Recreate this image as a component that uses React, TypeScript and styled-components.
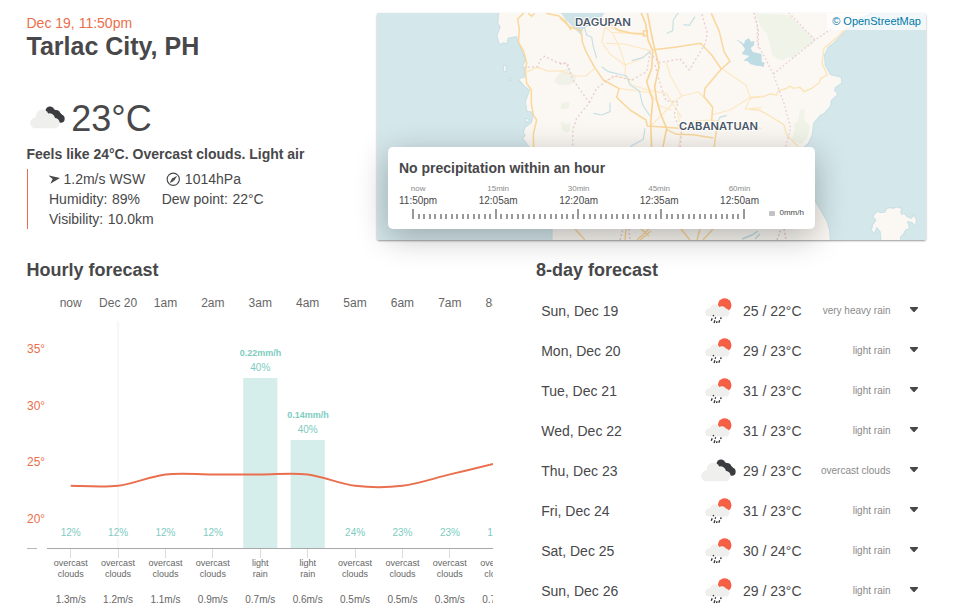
import React from "react";
import styled, { createGlobalStyle } from "styled-components";

const GlobalStyle = createGlobalStyle`
  * { box-sizing: border-box; }
  body { margin: 0; background: #fff; color: #48484a; font: 14px/20px "Liberation Sans", Arial, sans-serif; }
  svg { display: block; flex: none; }
`;

const Page = styled.main`
  width: 957px;
  height: 613px;
  overflow: hidden;
  padding: 13px 30px 0 26.5px;
`;
const TopRow = styled.section`
  display: grid;
  grid-template-columns: 350px 550px;
  height: 247px;
`;
const Timestamp = styled.div`
  color: #eb6e4b;
  height: 20px;
`;
const City = styled.h2`
  margin: 0 0 39px;
  font-size: 25px;
  line-height: 26px;
`;
const CurrentTemp = styled.div`
  display: flex;
  align-items: center;
  height: 40px;
  padding-left: 3px;
  gap: 6.5px;
  font-size: 36px;
  line-height: 40px;
`;
const CurrentDegrees = styled.span`
  padding-top: 2px;
`;
const Feels = styled.div`
  margin-top: 6px;
  font-weight: bold;
  line-height: 20px;
`;
const Facts = styled.ul`
  list-style: none;
  margin: 5px 0 0;
  padding: 0 0 0 21px;
  border-left: 1px solid #eb6e4b;
`;
const FactLine = styled.li`
  display: flex;
  gap: 21.2px;
  height: 20px;
`;
const Fact = styled.span`
  display: flex;
  align-items: center;
  gap: 4px;
  white-space: nowrap;
`;
const FactLabel = styled.span`
  padding: 0 0.6px 0 0.5px;
`;

const MapFrame = styled.div`
  position: relative;
  width: 549.5px;
  height: 227px;
  border-radius: 2px;
  box-shadow: 0 1px 2px rgba(0, 0, 0, 0.4);
`;
const Attribution = styled.a`
  position: absolute;
  top: 0;
  right: 0;
  padding: 0 5px;
  height: 17px;
  font-size: 11px;
  line-height: 16.5px;
  color: #0078a8;
  background: rgba(255, 255, 255, 0.7);
`;
const PrecipCard = styled.div`
  position: absolute;
  left: 11.5px;
  top: 134px;
  width: 427px;
  height: 82px;
  padding: 11px;
  border-radius: 5px;
  background: #fff;
  box-shadow: 0 8px 32px rgba(0, 0, 0, 0.28);
`;
const PrecipTitle = styled.div`
  font-weight: bold;
  line-height: 20px;
`;
const TimeRow = styled.div`
  display: flex;
  justify-content: space-between;
  width: 360px;
  margin-top: 5px;
`;
const TimeLabel = styled.div`
  text-align: center;
  font-size: 10px;
  line-height: 13px;
`;
const Offset = styled.div`
  color: #8a8a8a;
  font-size: 8px;
  line-height: 11px;
`;
const TickRow = styled.div`
  display: flex;
  align-items: flex-end;
  margin: 1px 0 0 13px;
`;
const Ticks = styled.div`
  display: flex;
  justify-content: space-between;
  align-items: flex-end;
  width: 333px;
  height: 10px;
`;
const Tick = styled.i<{ $major: boolean }>`
  width: 2px;
  height: ${(p) => (p.$major ? 10 : 5)}px;
  background: #999;
`;
const Legend = styled.div`
  display: flex;
  align-items: center;
  gap: 4.5px;
  margin: 0 0 1px 24px;
  font-size: 8px;
  line-height: 10px;
`;
const Swatch = styled.i`
  width: 6px;
  height: 5px;
  border-radius: 1px;
  background: #c2c2c2;
`;

const Forecasts = styled.section`
  display: grid;
  grid-template-columns: 466.5px 391px;
  gap: 43px;
`;
const Heading = styled.h3`
  margin: 0;
  font-size: 18px;
  line-height: 20px;
`;
const HourlyBody = styled.div`
  display: flex;
`;
const DegreeAxis = styled.div`
  width: 20.5px;
  height: 310px;
  padding: 59px 0 0 0.5px;
  color: #eb6e4b;
  font-size: 12px;
`;
const Degree = styled.div`
  height: 56.6px;
  line-height: 20px;
`;
const AxisStub = styled.div`
  width: 10px;
  height: 1px;
  margin-top: -17.4px;
  background: #b8b8b8;
`;
const Hours = styled.div`
  width: 446px;
  overflow: hidden;
`;
const HourRow = styled.div<{ $size: number; $height: number; $shift?: number }>`
  display: grid;
  grid-template-columns: repeat(10, 47.4px);
  height: ${(p) => p.$height}px;
  padding-top: ${(p) => p.$shift ?? 0}px;
  align-items: center;
  text-align: center;
  white-space: nowrap;
  font-size: ${(p) => p.$size}px;
  line-height: 11px;
  color: #666;
`;
const Condition = styled.div`
  white-space: pre-line;
`;

const DayList = styled.ul`
  list-style: none;
  margin: 11px 0 0;
  padding: 0 0 0 5.2px;
`;
const Day = styled.li`
  display: grid;
  grid-template-columns: 158.5px 37px 6.3px 62.5px 85px 20px 10px;
  height: 40px;
  align-items: center;
`;
const DayIcon = styled.span`
  display: flex;
  justify-content: center;
`;
const DayTemp = styled.span`
  grid-column: 4;
  white-space: nowrap;
`;
const DayText = styled.span`
  text-align: right;
  font-size: 10px;
  line-height: 18px;
  padding-bottom: 1px;
  color: #8a8a8a;
`;
const Caret = styled.svg`
  grid-column: 7;
  margin-top: -3px;
`;

const OvercastIcon = () => (
  <svg width="35.33" height="23.33" viewBox="62 58 106 70">
    <g fill="#3b3c40">
      <circle cx="122" cy="73" r="13.5" />
      <circle cx="141" cy="83" r="12" />
      <circle cx="154" cy="96" r="12" />
      <path d="M128 66L146 72L160 86L144 104L116 82Z" />
    </g>
    <g fill="#efefed">
      <circle cx="79" cy="108.500" r="16.500" />
      <circle cx="99" cy="88" r="19.500" />
      <circle cx="121" cy="96" r="16" />
      <circle cx="135" cy="109" r="16" />
      <path d="M79 90H125V125H79ZM110 100H135V125H110Z" />
    </g>
  </svg>
);

const RainIcon = () => (
  <svg width="26.67" height="26" viewBox="74 24 80 78">
    <circle cx="133" cy="45" r="20.500" fill="#f45f45" />
    <g fill="#efefed">
      <circle cx="87" cy="67" r="12.500" />
      <circle cx="104" cy="58" r="15.500" />
      <circle cx="125" cy="61" r="12.500" />
      <circle cx="135" cy="68" r="12.500" />
      <path d="M87 60H126V79.500H87ZM120 64H136V80.500H120Z" />
    </g>
    <path
      stroke="#303236"
      strokeWidth="4"
      d="M100 75L98.500 79M95.500 85L93 92M106 82L104.500 86M104 91L101 99M123 82L120.500 87M110.500 94L108.500 99M118 91L115.500 98"
    />
  </svg>
);

const WindIcon = () => (
  <svg width="11" height="9" viewBox="0 0 33 27">
    <path fill="#48484a" d="M-2 1L33 9L4 26L11 12Z" />
  </svg>
);

const GaugeIcon = () => (
  <svg width="14.500" height="14.500" viewBox="0 0 44 44">
    <circle cx="22" cy="22" r="18.500" fill="none" stroke="#48484a" strokeWidth="3.500" />
    <path fill="#48484a" d="M34 11L25 26L19 20ZM11 33L17 22L23 28Z" />
    <circle cx="21.500" cy="22.500" r="4" fill="#48484a" />
  </svg>
);

const MapDrawing = () => (
  <svg width="549.5" height="227" viewBox="377 13 549.5 227">
    <rect x="377" y="13" width="550" height="227" fill="#d4e7eb" />
    <g fill="#fbf8f3" stroke="#c6e0e5" strokeWidth="2" strokeLinejoin="round" style={{ paintOrder: "stroke" }}>
      <path d="M499.300 12L498.300 23L500.700 27L497.300 36L500 44L503.300 42.300L506.700 43.300L507.700 37.700L516.700 36L518.700 42L524 55L526 60L522.700 66.700L525.700 70L525 77.300L519 79.300L525 86L530 90L526 101.700L527.300 110.700L532.700 111.700L533.300 118L531.700 123L525 128L524 133L526 136L523 138L529 146L552.500 170L552.500 242L830 242L829 230L826.700 221.700L820 210L815 201.700L803 170L803.300 147L808 143L811.700 135L813.300 123L820 115L824 113L830 106L831 100L836.700 95L836.700 92.700L834 91L835 87.300L841.300 83L841 78L839.300 77.300L832 75.500L830 75L824.700 65L824 55L828 46.700L833 43L840 36L848 28L860 18L873 12Z" />
      <path d="M872 230L873 225L876.700 220L873.300 217L875 214L878 211.700L880 213L885 212.700L887 209L890 208L893 209L897 207.500L901.700 209L900 212L901.700 215L904 214L907 217L911 219L914 216L916 220L915 225L912 222L907 221L909 228L905 230L903 234L900 236.700L900 242L881.700 242L880.700 231.700L876.700 226.700L874 232.700Z" />
      <path d="M504 66h1.500v5h-1.500zM510 79h1v1h-1zM526 119l3 1l-3 2z" />
    </g>
    <path fill="#cde3e7" d="M560 12L605 12L600 20L592 24L583 29L581 35L575 29L567 21Z" />

    <g transform="translate(370 0) scale(.33333)" fill="none">
      <path fill="#f0f2e8" d="M553 245L560 228L576 215L590 222L600 220V255H565ZM572 318L580 308L585 312L598 305V322L580 328ZM575 367L588 373L600 370V392L590 396L578 390L585 380Z" />
      <path stroke="#fad79c" strokeWidth="4.500" d="M462 38L443 57L448 88L445 125L462 157L470 190L466 210L470 250L484 270L484 310L490 345L500 360L490 402L491 445M528 40L565 47L586 62L603 90M475 40L485 49L494 40" />
      <path stroke="#fce8c4" strokeWidth="4" d="M468 217L500 202L538 214L580 212L602 226" />
      <path stroke="#e6ccd0" strokeWidth="4" strokeDasharray="6 7" d="M460 202L504 200L510 180L524 169L560 187L590 192L602 220" />
    </g>

    <g transform="translate(560 0) scale(.33333)" fill="none" strokeLinejoin="round">
      <path fill="#f0f2e8" d="M0 222L20 205L35 218L50 230L38 252L0 248ZM4 308L26 305L22 326L2 326ZM4 366L32 380L24 398L4 390Z" />
      <path stroke="#fce8c4" strokeWidth="3.500" d="M137 75L125 125L150 162L197 197L194 225L215 255L270 272L318 280L365 352M78 72L110 60L155 97L250 103M145 80L190 98L250 100M138 130L192 132L272 152M155 95L180 145L195 195L236 180L272 155M318 185L330 225L365 288L414 276L432 292M484 205L558 256L572 295L555 328L605 322M455 345L510 330L572 292L605 288M175 265L270 278L300 318L335 330M0 213L50 228L78 228L105 204M130 245L170 228L222 242M365 288L337 310L330 320L275 375M360 382L410 362L455 360L605 385M352 338L365 388L355 445" />
      <path stroke="#fad79c" strokeWidth="4.500" d="M0 54L32 82L64 92L67 125L78 155L104 202L130 240L177 266L170 292L210 330L258 360L262 378L318 382L375 386M130 57L175 90L215 100L255 103M280 149L345 142L422 130L455 165L484 207L510 184L492 155L478 95L454 40M484 207L435 265L432 290L458 322L455 360L470 385L462 445M318 388L350 403L400 404L460 414M250 92H262V108H250Z" />
      <path stroke="#f9d498" strokeWidth="5" d="M262 38L270 80L280 130L297 200L284 260L290 300L303 345L320 385L308 445M243 38L257 70L264 120L278 152L275 205L260 245L278 300L272 370L275 445" />
      <path stroke="#e8ced3" strokeWidth="4" strokeDasharray="6 7" d="M0 192L22 188L38 238L88 308L50 355L38 390L38 442M88 308L110 265L162 227L215 240L260 215L270 160L298 188L360 177L388 210L435 132L442 100L425 40M285 195L297 240L318 303L355 306L342 345L365 400L360 442M582 38L595 90V145" />
      <path stroke="#c6e0e5" strokeWidth="3.500" d="M70 72L80 105L95 112L100 140L110 175M125 200L145 215L200 228L210 255L238 272L248 315L270 348M355 38L340 60L338 92L320 100M405 50L388 76L370 74M272 152L250 172L215 182M100 340L125 345L150 335V308M255 385L250 418L210 440M500 346L480 352L470 370" />
      <path fill="#bddce3" d="M528 118L540 124L552 132L556 120L567 115L573 125L583 123L582 136L572 144L578 156L605 162V198L590 197L572 193L562 183L550 182L568 168L545 162L555 147L545 132Z" />
    </g>

    <g transform="translate(750 0) scale(.33333)" fill="none">
      <path fill="#f0f3e8" d="M15 40L120 45L150 78L195 115L190 132L170 140L145 156L135 175L115 172L100 180L85 178L65 165L60 130L50 100L38 90L30 75ZM150 330L165 328L162 360L180 378L174 412L155 432L140 425L125 425L135 385L130 378L145 360Z" />
      <path fill="#bddce3" d="M0 148L8 155L2 165L18 172L30 184L44 188L40 202L25 195L0 190Z" />
      <path stroke="#fce4b8" strokeWidth="4" d="M0 294L40 290L60 282L80 285L85 272L110 265L120 258L130 265L150 262L162 275L185 265L208 248L212 235L232 225L216 190L222 145L270 104L295 78M0 328L28 330L60 348L102 375L110 405L145 440" />
      <path stroke="#e8ced3" strokeWidth="4" strokeDasharray="5 7" d="M12 38L22 75L22 130L70 222L102 310L122 385L106 442M116 38L195 120L245 86M195 120L70 222" />
    </g>

    <g fill="none" strokeWidth="1.500" stroke="#fad79c">
      <path d="M575 229L585 240M626 229L625 240M649 229L637 240M649 236L641 229M681 229L690 240M700 229L697 240M713 229L703 240M640 240L651 231" />
      <path stroke="#e6ccd0" strokeDasharray="2 2" d="M620 240L623 229M629 229L630 240M777 240L781 229M784 229L786 240" />
      <path stroke="#c0dce2" d="M742 239L752 235L758 231M755 239L760 234" />
    </g>

    <g fontFamily="Inter, sans-serif" fontWeight="600" fontSize="10.500" fill="#4b5869" stroke="#fff" strokeWidth="2" strokeLinejoin="round" style={{ paintOrder: "stroke" }}>
      <text x="575" y="25.700" textLength="56" lengthAdjust="spacingAndGlyphs">DAGUPAN</text>
      <text x="679" y="130" textLength="79" lengthAdjust="spacingAndGlyphs">CABANATUAN</text>
    </g>
  </svg>
);

const precipTimes = [
  ["now", "11:50pm"],
  ["15min", "12:05am"],
  ["30min", "12:20am"],
  ["45min", "12:35am"],
  ["60min", "12:50am"],
];

type Hour = { time: string; temp: number; pop: string; sky: string; wind: string; rain?: string; bar?: number };
const hours: Hour[] = [
  { time: "now", temp: 23, pop: "12%", sky: "overcast\nclouds", wind: "1.3m/s" },
  { time: "Dec 20", temp: 23, pop: "12%", sky: "overcast\nclouds", wind: "1.2m/s" },
  { time: "1am", temp: 24, pop: "12%", sky: "overcast\nclouds", wind: "1.1m/s" },
  { time: "2am", temp: 24, pop: "12%", sky: "overcast\nclouds", wind: "0.9m/s" },
  { time: "3am", temp: 24, pop: "40%", sky: "light\nrain", wind: "0.7m/s", rain: "0.22mm/h", bar: 170 },
  { time: "4am", temp: 24, pop: "40%", sky: "light\nrain", wind: "0.6m/s", rain: "0.14mm/h", bar: 108 },
  { time: "5am", temp: 23, pop: "24%", sky: "overcast\nclouds", wind: "0.5m/s" },
  { time: "6am", temp: 23, pop: "23%", sky: "overcast\nclouds", wind: "0.5m/s" },
  { time: "7am", temp: 24, pop: "23%", sky: "overcast\nclouds", wind: "0.3m/s" },
  { time: "8am", temp: 25, pop: "17%", sky: "overcast\nclouds", wind: "0.7m/s" },
];

const COL = 47.4;
const BASE = 228;
const colX = (i: number) => COL * (i + 0.5);
const tempY = (t: number) => 165.8 - (t - 23) * 11.4;

const tempPath = () => {
  const pts = hours.map((h, i) => [colX(i), tempY(h.temp)]);
  let d = `M${pts[0]}`;
  for (let i = 0; i < pts.length - 1; i++) {
    const a = pts[Math.max(i - 1, 0)];
    const b = pts[i];
    const c = pts[i + 1];
    const e = pts[Math.min(i + 2, pts.length - 1)];
    d += `C${b[0] + (c[0] - a[0]) / 6} ${b[1] + (c[1] - a[1]) / 6} ${c[0] - (e[0] - b[0]) / 6} ${c[1] - (e[1] - b[1]) / 6} ${c[0]} ${c[1]}`;
  }
  return d;
};

const HourlyChart = () => (
  <svg width="474" height="238" viewBox="0 0 474 238" textAnchor="middle">
    <path d="M71.200 1V228" stroke="#f7f7f7" strokeWidth="2" />
    {hours.map((h, i) => (
      <g key={h.time} fill="#7cccbf">
        {h.bar && <rect x={colX(i) - 17.100} y={BASE - h.bar} width="34.200" height={h.bar} fill="#d6eeeb" />}
        <text x={colX(i)} y={h.bar ? BASE - h.bar - 7 : 216} fontSize="10" stroke="#fff" strokeWidth="2" style={{ paintOrder: "stroke" }}>
          {h.pop}
        </text>
        {h.bar && (
          <text x={colX(i) + 0.3} y={BASE - h.bar - 22} fontSize="9" fontWeight="bold">
            {h.rain}
          </text>
        )}
        <path d={`M${Math.floor(colX(i)) + 0.5} 229V238`} stroke="#dcdcdc" />
      </g>
    ))}
    <path d="M0 228.500H474" stroke="#a8a8a8" />
    <path d={tempPath()} fill="none" stroke="#ea6f4f" strokeWidth="2" />
  </svg>
);

const days = [
  ["Sun, Dec 19", "25 / 22°C", "very heavy rain"],
  ["Mon, Dec 20", "29 / 23°C", "light rain"],
  ["Tue, Dec 21", "31 / 23°C", "light rain"],
  ["Wed, Dec 22", "31 / 23°C", "light rain"],
  ["Thu, Dec 23", "29 / 23°C", "overcast clouds"],
  ["Fri, Dec 24", "31 / 23°C", "light rain"],
  ["Sat, Dec 25", "30 / 24°C", "light rain"],
  ["Sun, Dec 26", "29 / 23°C", "light rain"],
];

export default function App() {
  return (
    <Page>
      <GlobalStyle />
      <TopRow>
        <div>
          <Timestamp>Dec 19, 11:50pm</Timestamp>
          <City>Tarlac City, PH</City>
          <CurrentTemp>
            <OvercastIcon />
            <CurrentDegrees>23°C</CurrentDegrees>
          </CurrentTemp>
          <Feels>Feels like 24°C. Overcast clouds. Light air</Feels>
          <Facts>
            <FactLine>
              <Fact><WindIcon />1.2m/s WSW</Fact>
              <Fact><GaugeIcon />1014hPa</Fact>
            </FactLine>
            <FactLine>
              <Fact><FactLabel>Humidity:</FactLabel>89%</Fact>
              <Fact><FactLabel>Dew point:</FactLabel>22°C</Fact>
            </FactLine>
            <FactLine>
              <Fact><FactLabel>Visibility:</FactLabel>10.0km</Fact>
            </FactLine>
          </Facts>
        </div>
        <MapFrame>
          <MapDrawing />
          <Attribution>© OpenStreetMap</Attribution>
          <PrecipCard>
            <PrecipTitle>No precipitation within an hour</PrecipTitle>
            <TimeRow>
              {precipTimes.map(([offset, time]) => (
                <TimeLabel key={time}>
                  <Offset>{offset}</Offset>
                  {time}
                </TimeLabel>
              ))}
            </TimeRow>
            <TickRow>
              <Ticks>
                {Array.from({ length: 61 }, (_, i) => (
                  <Tick key={i} $major={i % 15 === 0} />
                ))}
              </Ticks>
              <Legend><Swatch />0mm/h</Legend>
            </TickRow>
          </PrecipCard>
        </MapFrame>
      </TopRow>
      <Forecasts>
        <div>
          <Heading>Hourly forecast</Heading>
          <HourlyBody>
            <DegreeAxis>
              {["35°", "30°", "25°", "20°"].map((d) => (
                <Degree key={d}>{d}</Degree>
              ))}
              <AxisStub />
            </DegreeAxis>
            <Hours>
              <HourRow $size={12} $height={40} $shift={6}>
                {hours.map((h) => <div key={h.time}>{h.time}</div>)}
              </HourRow>
              <HourlyChart />
              <HourRow $size={9} $height={22}>
                {hours.map((h) => <Condition key={h.time}>{h.sky}</Condition>)}
              </HourRow>
              <HourRow $size={10} $height={38}>
                {hours.map((h) => <div key={h.time}>{h.wind}</div>)}
              </HourRow>
            </Hours>
          </HourlyBody>
        </div>
        <div>
          <Heading>8-day forecast</Heading>
          <DayList>
            {days.map(([date, temp, text]) => (
              <Day key={date}>
                <span>{date}</span>
                <DayIcon>{text === "overcast clouds" ? <OvercastIcon /> : <RainIcon />}</DayIcon>
                <DayTemp>{temp}</DayTemp>
                <DayText>{text}</DayText>
                <Caret width="8" height="5" viewBox="0 0 8 5">
                  <path d="M0 0H8V1L4.500 5H3.500L0 1Z" fill="#48484a" />
                </Caret>
              </Day>
            ))}
          </DayList>
        </div>
      </Forecasts>
    </Page>
  );
}
